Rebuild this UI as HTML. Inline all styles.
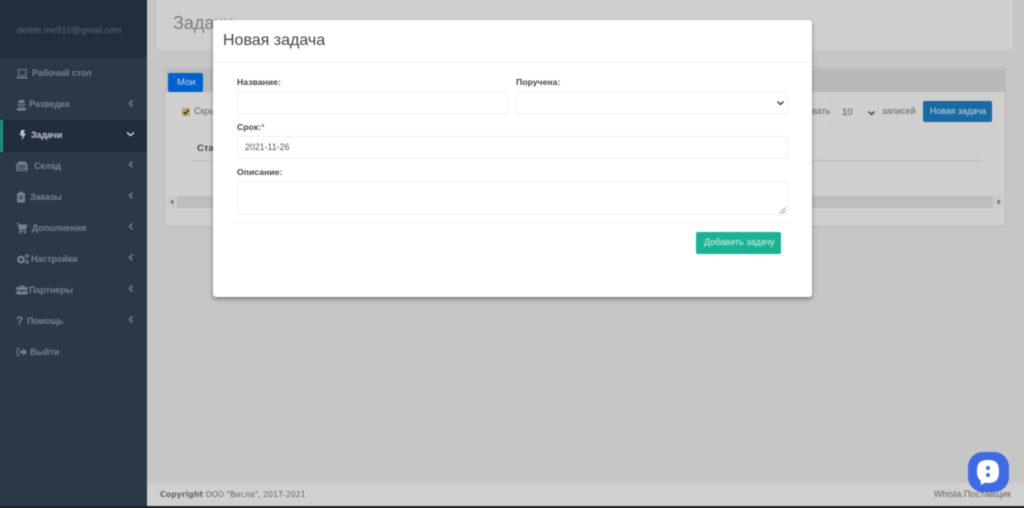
<!DOCTYPE html>
<html lang="ru">
<head>
<meta charset="utf-8">
<title>Новая задача</title>
<style>
html{margin:0;padding:0;width:1024px;height:508px;overflow:hidden;background:#c6c6c6}
body{margin:0;padding:0;width:1024px;height:508px;font-family:"Liberation Sans",sans-serif;position:relative;overflow:hidden}
#wrap{left:0;top:0;width:1024px;height:508px;filter:blur(.4px)}
div,span,label,svg{position:absolute;box-sizing:border-box}
.t{white-space:nowrap;line-height:1}
#side{left:-6px;top:-6px;width:153px;height:520px;background:#2a3848}
#sidetop{left:-6px;top:-6px;width:153px;height:64px;background:#212e3c}
.m{font-family:"Liberation Sans",sans-serif;font-size:9px;color:#76818e;font-weight:bold;letter-spacing:-.1px}
.ic{fill:#76818e}
.ch{stroke:#76818e;stroke-width:1.500;fill:none}
#modal{left:213px;top:20px;width:599px;height:277px;background:#fff;border-radius:3px;box-shadow:0 2px 4px rgba(0,0,0,.4)}
.f{background:#fff;border:1px solid #f0f0f0;border-radius:2px}
.l{font-size:8.600px;font-weight:bold;color:#444;letter-spacing:.05px}
</style>
</head>
<body>
<div id="wrap">
<div style="left:-6px;top:-6px;width:1036px;height:520px;background:#c6c6c6"></div>
<div id="side"></div>
<div id="sidetop"></div>
<div class="t" style="left:17px;top:26px;font-size:9px;color:#5b6673">delete.me910@gmail.com</div>

<div style="left:3px;top:120px;width:144px;height:32px;background:#212d3a"></div>
<div style="left:0;top:120px;width:3px;height:32px;background:#149a7c"></div>

<svg style="left:16px;top:68px" width="12" height="12" viewBox="0 0 12 12"><path class="ic" d="M2 1h8.500v7H2zM3 2v5h6.500V2zM.5 9h11v1.500H.5z" fill-rule="evenodd"/></svg>
<div class="t m" style="left:32px;top:69px">Рабочий стол</div>

<svg style="left:16px;top:99px" width="11" height="12" viewBox="0 0 11 12"><path class="ic" d="M3 1h5l1 3H2zM1 5h9v1H1zM2 7h7v1H2zM1 9h9v2.500H1z"/></svg>
<div class="t m" style="left:29px;top:100px">Разведка</div>

<svg style="left:19px;top:129px" width="8" height="12" viewBox="0 0 8 12"><path fill="#c3c8ce" d="M2 1h4L4.500 4.500H7L2.500 11.500 3.500 6.500H1z"/></svg>
<div class="t m" style="left:31px;top:131px;color:#c3c8ce">Задачи</div>

<svg style="left:16px;top:160px" width="12" height="12" viewBox="0 0 12 12"><path class="ic" d="M3 1.500h6L11.500 4v7H.5V4zM2 5v1h8V5zM2 7v1h8V7zM2 9v1h8V9z" fill-rule="evenodd"/></svg>
<div class="t m" style="left:34px;top:162px">Склад</div>

<svg style="left:16px;top:191px" width="10" height="12" viewBox="0 0 10 12"><path class="ic" d="M3.500.5h3V2H9v9.500H1V2h2.500zM3 5v1h4V5zM3 7v1h4V7z" fill-rule="evenodd"/></svg>
<div class="t m" style="left:30px;top:193px">Заказы</div>

<svg style="left:16px;top:222px" width="12" height="12" viewBox="0 0 12 12"><path class="ic" d="M.5 1H3l.4 1.500h8L10 7.500H4.500L4.700 8.500H10v1H3.500L2 2H.5z"/><circle class="ic" cx="4.500" cy="10.500" r="1.100"/><circle class="ic" cx="9" cy="10.500" r="1.100"/></svg>
<div class="t m" style="left:32px;top:224px">Дополнения</div>

<svg style="left:16px;top:253px" width="13" height="12" viewBox="0 0 13 12"><circle cx="5" cy="6.500" r="2.800" fill="none" stroke="#76818e" stroke-width="2.200"/><circle cx="11" cy="3" r="1.300" fill="none" stroke="#76818e" stroke-width="1.200"/><circle cx="11" cy="9" r="1.300" fill="none" stroke="#76818e" stroke-width="1.200"/></svg>
<div class="t m" style="left:31px;top:255px">Настройки</div>

<svg style="left:16px;top:284px" width="12" height="12" viewBox="0 0 12 12"><path class="ic" d="M4 1.500h4V3h3.500v3h-11V3H4zM5 2.500V3h2v-.5zM.5 7h4.500v1h2V7h4.500v3.500H.5z" fill-rule="evenodd"/></svg>
<div class="t m" style="left:29px;top:286px">Партнеры</div>

<div class="t" style="left:16px;top:315px;font-size:12px;font-weight:bold;color:#76818e">?</div>
<div class="t m" style="left:27px;top:317px">Помощь</div>

<svg style="left:16px;top:346px" width="12" height="12" viewBox="0 0 12 12"><path class="ch" style="stroke-width:1.100" d="M4 2.500H1.500v7H4"/><path class="ic" d="M4 4.700h3V2.500L11.500 6 7 9.500V7.300H4z"/></svg>
<div class="t m" style="left:30px;top:348px">Выйти</div>

<svg style="left:128px;top:99px" width="6" height="9" viewBox="0 0 6 9"><path class="ch" d="M4.500 1.500L1.500 4.500l3 3"/></svg>
<svg style="left:126px;top:131px" width="9" height="6" viewBox="0 0 9 6"><path fill="none" stroke="#c3c8ce" stroke-width="1.600" d="M1 1.500l3.500 3 3.500-3"/></svg>
<svg style="left:128px;top:160px" width="6" height="9" viewBox="0 0 6 9"><path class="ch" d="M4.500 1.500L1.500 4.500l3 3"/></svg>
<svg style="left:128px;top:191px" width="6" height="9" viewBox="0 0 6 9"><path class="ch" d="M4.500 1.500L1.500 4.500l3 3"/></svg>
<svg style="left:128px;top:222px" width="6" height="9" viewBox="0 0 6 9"><path class="ch" d="M4.500 1.500L1.500 4.500l3 3"/></svg>
<svg style="left:128px;top:253px" width="6" height="9" viewBox="0 0 6 9"><path class="ch" d="M4.500 1.500L1.500 4.500l3 3"/></svg>
<svg style="left:128px;top:284px" width="6" height="9" viewBox="0 0 6 9"><path class="ch" d="M4.500 1.500L1.500 4.500l3 3"/></svg>
<svg style="left:128px;top:315px" width="6" height="9" viewBox="0 0 6 9"><path class="ch" d="M4.500 1.500L1.500 4.500l3 3"/></svg>

<div style="left:157px;top:-6px;width:856px;height:56px;background:#cfcfcf"></div>
<div class="t" style="left:173px;top:14px;font-size:18px;color:#7d7d7d">Задачи</div>

<div style="left:164px;top:67px;width:842px;height:160px;background:#cfcfcf;border:1px solid #b9b9b9;border-radius:2px"></div>
<div style="left:166px;top:69px;width:839px;height:23px;background:#b9b9b9"></div>
<div style="left:168px;top:73px;width:35px;height:19px;background:#0062cc;border-radius:2px"></div>
<div class="t" style="left:177px;top:78px;font-size:9.500px;color:#c8d6ea">Мои</div>

<div style="left:182px;top:108px;width:8px;height:8px;background:#bca968;border-radius:1px"></div>
<svg style="left:182px;top:108px" width="8" height="8" viewBox="0 0 8 8"><path d="M1.500 4l2 2 3-4.500" fill="none" stroke="#222" stroke-width="1.200"/></svg>
<div class="t" style="left:194px;top:107px;font-size:9px;color:#666">Скрыть</div>
<div class="t" style="left:197px;top:144px;font-size:9.500px;font-weight:bold;color:#444">Статус</div>
<div style="left:192px;top:160px;width:789px;height:1px;background:#b9b9b9"></div>

<div class="t" style="left:812px;top:107px;font-size:9px;color:#666">вать</div>
<div style="left:830px;top:101px;width:48px;height:24px;background:#cfcfcf;border:1px solid #cacaca"></div>
<div class="t" style="left:842px;top:108px;font-size:9.500px;color:#555">10</div>
<svg style="left:867px;top:110px" width="9" height="6" viewBox="0 0 9 6"><path fill="none" stroke="#444" stroke-width="1.500" d="M1.500 1.500l3 3 3-3"/></svg>
<div class="t" style="left:882px;top:107px;font-size:9px;color:#666">записей</div>
<div style="left:923px;top:101px;width:69px;height:21px;background:#1a6aa3;border-radius:2px"></div>
<div class="t" style="left:930px;top:107px;font-size:8.800px;color:#c4d6e4">Новая задача</div>

<div style="left:166px;top:196px;width:839px;height:12px;background:#bdbdbd"></div>
<div style="left:166px;top:196px;width:11px;height:12px;background:#cbcbcb"></div>
<div style="left:993px;top:196px;width:12px;height:12px;background:#cbcbcb"></div>
<svg style="left:170px;top:199px" width="4" height="6" viewBox="0 0 4 6"><path d="M3.500 0v6L0 3z" fill="#777"/></svg>
<svg style="left:997px;top:199px" width="4" height="6" viewBox="0 0 4 6"><path d="M.5 0v6L4 3z" fill="#777"/></svg>

<div style="left:147px;top:483px;width:883px;height:23px;background:#d0d0d0"></div>
<div style="left:-6px;top:506px;width:1036px;height:8px;background:#222"></div>
<div class="t" style="left:160px;top:491px;font-family:'DejaVu Sans',sans-serif;font-size:7.800px;color:#666"><b>Copyright</b> ООО "Висла", 2017-2021</div>
<div class="t" style="right:13px;top:490px;font-size:9.200px;color:#666">Whisla.Поставщик</div>

<div id="modal"></div>
<div style="left:213px;top:62px;width:599px;height:1px;background:#eeeeee"></div>
<div class="t" style="left:223px;top:33px;font-size:16px;color:#444">Новая задача</div>

<div class="t l" style="left:237px;top:78px">Название:</div>
<div class="f" style="left:237px;top:91px;width:271px;height:23px"></div>
<div class="t l" style="left:516px;top:78px">Поручена:</div>
<div class="f" style="left:516px;top:91px;width:272px;height:23px"></div>
<svg style="left:776px;top:100px" width="9" height="6" viewBox="0 0 9 6"><path fill="none" stroke="#444" stroke-width="1.500" d="M1.500 1.500l3 3 3-3"/></svg>

<div class="t l" style="left:237px;top:123px">Срок:<span style="position:static;font-weight:normal">*</span></div>
<div class="f" style="left:237px;top:136px;width:551px;height:23px"></div>
<div class="t" style="left:245px;top:143px;font-size:8.800px;color:#555">2021-11-26</div>

<div class="t l" style="left:237px;top:168px">Описание:</div>
<div class="f" style="left:237px;top:181px;width:551px;height:34px"></div>
<svg style="left:779px;top:207px" width="7" height="7" viewBox="0 0 7 7"><path d="M6.500 .5L.5 6.500M6.500 3.500l-3 3" stroke="#888" stroke-width=".8" fill="none"/></svg>
<div style="left:233px;top:222px;width:559px;height:1px;background:#f4f4f4"></div>

<div style="left:696px;top:232px;width:85px;height:22px;background:#1ab394;border-radius:2px"></div>
<div class="t" style="left:704px;top:238px;font-size:9px;color:#d8f3ec">Добавить задачу</div>

<div style="left:968px;top:452px;width:41px;height:40px;background:#4169e1;border-radius:15px"></div>
<svg style="left:968px;top:452px" width="40" height="40" viewBox="0 0 40 40">
<path fill="#fff" d="M20 8c8 0 11 3 11 11.500S27.500 31 20 31c-1 0-2 0-3-.2L13 33l-.5-4.500C10 26.500 9 23.500 9 19.500 9 11 12 8 20 8z"/>
<circle cx="20" cy="16" r="2" fill="#4169e1"/><circle cx="20" cy="23" r="2" fill="#4169e1"/>
</svg>
</div>
</body>
</html>
